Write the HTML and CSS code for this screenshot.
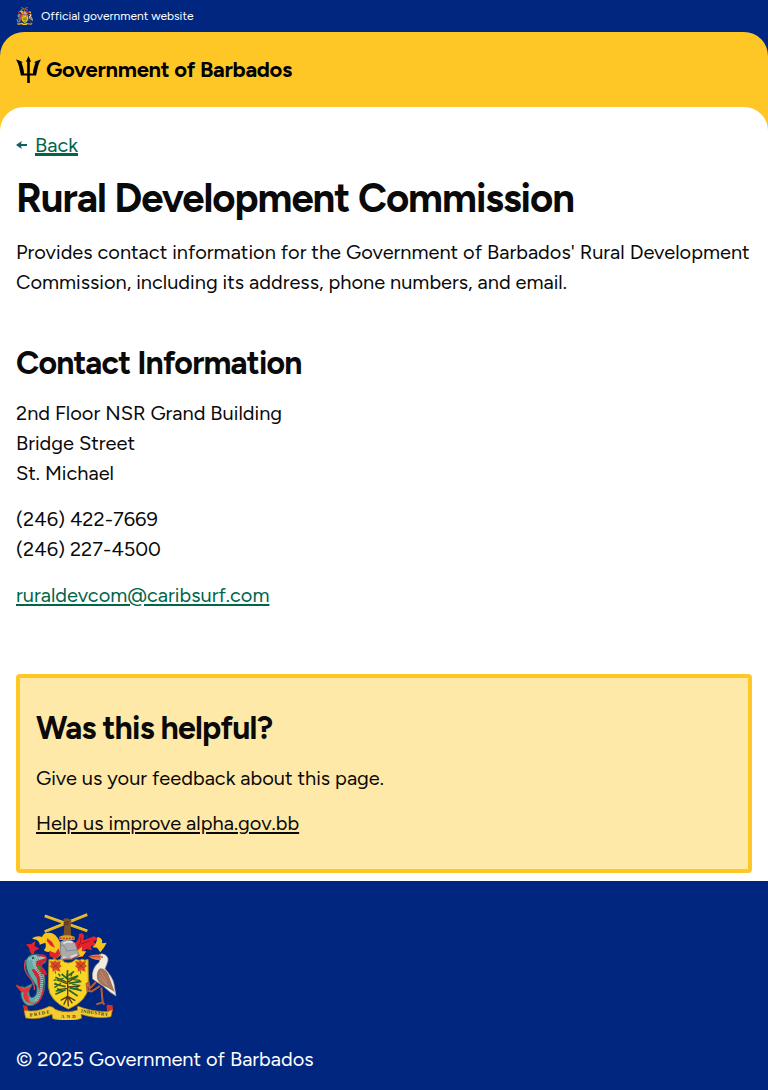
FILE: index.html
```html
<!DOCTYPE html>
<html lang="en">
<head>
<meta charset="utf-8">
<title>Rural Development Commission</title>
<link rel="stylesheet" href="styles.css">
</head>
<body>
<svg class="sprite" aria-hidden="true">
  <symbol id="arms" viewBox="18 24 303 321">
    <!-- crest: crossed canes and hand -->
    <path d="M104 80 232 29M104 33 232 78" stroke="#e3b322" stroke-width="8"/>
    <path d="M104 77 231 26M105 30 232 75" stroke="#f8dc50" stroke-width="2"/>
    <path d="M160 43q10-8 24 2l-2 20 2 31h-24l3-32-2-15z" fill="#7a5026"/>
    <path d="M160 54l17-4m-17 9 16-2" stroke="#2f2115" stroke-width="2"/>
    <!-- mantling -->
    <path d="M150 112Q136 80 112 84q-10-2-16 12-14-6-30 4 5 4 13 4 10 5 10 15l17-6q5 14-5 22 10 10 22 4 2 18 12 24l18-14z" fill="#f4c51c"/>
    <path d="M48 118l15-1 13-9-2 15 14 8-13 6-7 16-8-13-3-12z" fill="#e3242c"/>
    <path d="M112 100l14 10 9 18-13-6-12-14zM118 138l18 6 10-14 5 18-14 14-18-8z" fill="#e3242c"/>
    <path d="M190 115q17-4 17-28 12-6 15 5l-2 14 32-12 14 8-16 7 9 10-17 5 4 12-17-4-12 9 2 15-20-4z" fill="#e3242c"/>
    <path d="M262 96q18 3 14 19l14-2-7 13-12 16-10-14-14-1q14-10 15-31z" fill="#f4c51c"/>
    <path d="M190 128l12 9 14-12-1 14 14 0-10 14-20 5-9-12z" fill="#f4c51c"/>
    <path d="M212 97q2 20-11 31m13-11 26-10" fill="none" stroke="#9e1624" stroke-width="3"/>
    <path d="M148 95q20-8 46 0v10h-46z" fill="#d7a41e"/>
    <path d="M150 100h43" stroke="#b92720" stroke-width="4" stroke-dasharray="5 4"/>
    <!-- helmet -->
    <path d="M151 111q23-15 44 3l13 38-24 12h-20l-14 8q6-17 1-37z" fill="#acabac" stroke="#777783" stroke-width="2"/>
    <path d="M152 120q15 0 17 18l32-3" fill="none" stroke="#777783" stroke-width="2"/>
    <path d="M160 115q16-8 28-2M159 157l9 2m14-3 19-7" stroke="#dddcdb" stroke-width="6" fill="none"/>
    <path d="M150 172l12-10 22 1 24-12" stroke="#ae3029" stroke-width="3" fill="none"/>
    <!-- shield -->
    <path d="M117 163q8 3 15-1 10 7 21 1 10 11 22 11t22-11q10 6 20 0 8 6 17 0l1 80q-3 45-60 69-58-24-60-69z" fill="#f9d526" stroke="#b78f1d" stroke-width="3"/>
    <g id="flower" fill="#d94c24"><path d="M119 168l11 2 5-4 6 5 11-4-2 11 5 6-7 5 3 11-13-4-11 4 1-9-9-7 5-5z"/><path d="M127 175l18 15m0-15-17 16" stroke="#8d261c" stroke-width="2"/><path d="M136 198v8" stroke="#477e29" stroke-width="3"/></g>
    <use href="#flower" x="76"/>
    <path d="M173 204v70m0 0-21 12m21-12-12 25m12-25 2 30m-2-30 14 21m-14-21 23 13m-23-50-31-12m31 25-29 4m29-22 27-18m-27 32 35-2" stroke="#5a3813" stroke-width="4" fill="none"/>
    <g fill="none" stroke="#28672d" stroke-width="5"><path d="M173 195l-3 25-15-13m20 5 17-13m-18 24 31-11m-28 23 37-6m-35 19 36 9m-39-2 27 18M170 232l-34-15m31 28-34-8m34 17-31 14"/><path d="M161 220l-21 6m13 9-20 13m26 8-22 2m53-34 20 2m-23 12 24 4m-31 8 22 2M151 214l-6-8m-6 18-8 2m10 13-7-5m49-20 3-10m6 15 10-1m-2 14 8-7m-10 20 7 8m-61-4-2 9" stroke-width="4"/></g>
    <!-- dolphin -->
    <path d="M48 166q9-22 37-18 25 5 23 22-8 10-25 11 24 16 22 47 1 44-23 66-27 19-42-4-11-21-5-34l-17-13 27 4 24-12-12 21q-1 27 14 20 12-6 9-32L61 215q-16-24-13-49z" fill="#62aaa4" stroke="#316169" stroke-width="3"/>
    <path d="M81 151q24-10 30 8-2 13-12 14l-3 13q16 12 14 25l-15-4q13 25 4 61-9 32-30 32 18-14 18-43l-7-38-15-24q8-7 12 2z" fill="#cd2633"/>
    <path d="M18 238l23 13 24-8-12 20q-1 21 9 32l-14-5q-13-18-6-26-17-5-24-26z" fill="#df3438"/>
    <path d="M47 165q-9 27 7 46 22 24 19 44m-17 15q-2 27 14 24" fill="none" stroke="#e54649" stroke-width="4"/>
    <path d="M56 163l19-8 18 4-22 8q1 18 13 31 15 20 10 49-3 29-18 42" fill="none" stroke="#91c8c0" stroke-width="9" stroke-dasharray="4 2"/>
    <path d="M83 179l12 9-9 10z" fill="#25923a"/><circle cx="69" cy="159" r="3" fill="#172f35"/>
    <!-- pelican -->
    <path d="M265 151q10-9 21-1 12 8 6 23l-7 18q24 27 27 46l6 36-18-12-20-17-32-22q-5-31 20-51l3-21z" fill="#f1ece1" stroke="#a79b90" stroke-width="2"/>
    <path d="M271 149q-23-3-36 5 19 15 38 10z" fill="#ef7542"/><path d="M235 154l36 2" stroke="#a43422" stroke-width="2"/>
    <circle cx="276" cy="156" r="2.5" fill="#222"/>
    <path d="M270 190q21 0 29 29l15 42-20-13q-26-8-33-27-3-22 9-31z" fill="#a6735c"/>
    <path d="M272 200l18 28m-21-18 25 31m-26-22 22 20" stroke="#be8c73" stroke-width="3"/>
    <path d="M258 231l-19 20-3-19-6 5 2 20 13 2 25-16M274 248l4 44-19 6m19-7 5 8" fill="none" stroke="#b95d37" stroke-width="6"/>
    <!-- motto ribbon -->
    <path d="M38 300l13 3 5 16-13-2zM290 299l18 2 1 17-18 8z" fill="#d92f25"/>
    <path d="M42 316q38 8 76-12l11 3q5 8 18 10 28 8 56-2-3-8 1-12 34 16 88 17 8-2 15-6l-4 21q-39 9-90-7l2 12q-38 14-87 1l-2-13q-38 18-79 11z" fill="#f3cb32" stroke="#a77916" stroke-width="2"/>
    <g class="motto"><text x="60" y="335" transform="rotate(-10 60 335)" textLength="60">PRIDE</text><text x="153" y="338" textLength="44">AND</text><text x="212" y="322" transform="rotate(8 212 322)" textLength="82">INDUSTRY</text></g>
  </symbol>
</svg>
<div class="official">
  <svg class="official-arms" aria-hidden="true"><use href="#arms"/></svg>
  <span>Official government website</span>
</div>
<div class="brand-backdrop">
  <header class="brand">
    <svg class="trident" viewBox="0 0 25 27" aria-hidden="true">
      <path d="M12.5 0l2.7 5.9-1.4-.5v12.1h3.1c.3-4.4 1.5-7.6 2.7-11.2l-1.8.5c1.8-1.8 4.8-2.6 7.2-3.3-3 4.3-3.5 10-4.9 16.1h-6.3V27h-2.6v-7.4H4.9C3.5 13.500 3 7.800 0 3.500c2.400.7 5.400 1.500 7.200 3.300l-1.800-.5c1.200 3.600 2.400 6.800 2.700 11.200h3.100V5.400l-1.400.5z"/>
    </svg>
    <span class="brand-name">Government of Barbados</span>
  </header>
  <main class="content">
    <a class="back" href="#"><svg class="arrow" viewBox="0 0 11 8" aria-hidden="true"><path d="M0 4 5.8 0 5 3H11v2H5l.8 3z"/></svg><span class="back-label">Back</span></a>
    <h1 class="title">Rural Development Commission</h1>
    <p class="intro">Provides contact information for the Government of Barbados' Rural Development Commission, including its address, phone numbers, and email.</p>
    <h2 class="heading">Contact Information</h2>
    <address class="contact">
      <p>2nd Floor NSR Grand Building<br>Bridge Street<br>St. Michael</p>
      <p>(246) 422-7669<br>(246) 227-4500</p>
      <p><a class="email" href="#">ruraldevcom@caribsurf.com</a></p>
    </address>
    <section class="feedback">
      <h2 class="feedback-heading">Was this helpful?</h2>
      <p class="feedback-text">Give us your feedback about this page.</p>
      <p><a class="feedback-link" href="#">Help us improve alpha.gov.bb</a></p>
    </section>
  </main>
</div>
<footer class="footer">
  <svg class="footer-arms" role="img" aria-label="Coat of arms of Barbados"><use href="#arms"/></svg>
  <p class="copyright">© 2025 Government of Barbados</p>
</footer>
</body>
</html>
```
FILE: styles.css
```css
* { box-sizing: border-box; }
body {
  margin: 0;
  background: #00267f;
  color: #0a0a0a;
  font: 400 20px/30px Figtree, Lato, sans-serif;
}
h1, h2, p { margin: 0; }
.sprite { display: none; }
.motto { fill: #3d331b; font: 700 14px "Liberation Serif", serif; }
.official {
  display: flex;
  align-items: center;
  gap: 8px;
  height: 32px;
  padding: 0 16px;
  color: #fff;
  font-size: 12px;
  line-height: 18px;
}
.official-arms { width: 17px; height: 18px; }
.brand-backdrop { background: #ffc726; border-radius: 24px 24px 0 0; }
.brand { display: flex; align-items: center; gap: 5px; height: 75px; padding: 0 16px; }
.trident { width: 25px; height: 27px; }
.brand-name { color: #000; font-size: 22px; font-weight: 700; letter-spacing: -.3px; }
.content {
  padding: 23px 16px 8px;
  background: #fff;
  border-radius: 24px 24px 0 0;
}
.back { display: flex; align-items: center; gap: 8px; width: max-content; color: #00654a; }
.back-label, .email, .feedback-link {
  text-decoration: underline;
  text-decoration-thickness: 2px;
  text-underline-offset: 2px;
}
.arrow { width: 11px; height: 8px; fill: #0e5f64; }
.title { margin-top: 15px; font-size: 40px; line-height: 46px; letter-spacing: -.025em; }
.intro { margin-top: 16px; }
.heading { margin-top: 46px; font-size: 32px; line-height: 40px; letter-spacing: -.025em; }
.contact { display: grid; gap: 16px; margin-top: 15px; font-style: normal; }
.email { color: #00654a; }
.feedback {
  height: 199px;
  margin-top: 64px;
  padding: 30px 16px;
  border: 4px solid #ffc726;
  border-radius: 4px;
  background: #ffe9a8;
}
.feedback-heading { font-size: 32px; line-height: 40px; letter-spacing: -.025em; }
.feedback-text { margin: 15px 0; }
.feedback-link { color: #0a0a0a; }
.footer { padding: 32px 16px 16px; color: #fff; }
.footer-arms { display: block; width: 101px; height: 107px; }
.copyright { margin-top: 24px; }
```
